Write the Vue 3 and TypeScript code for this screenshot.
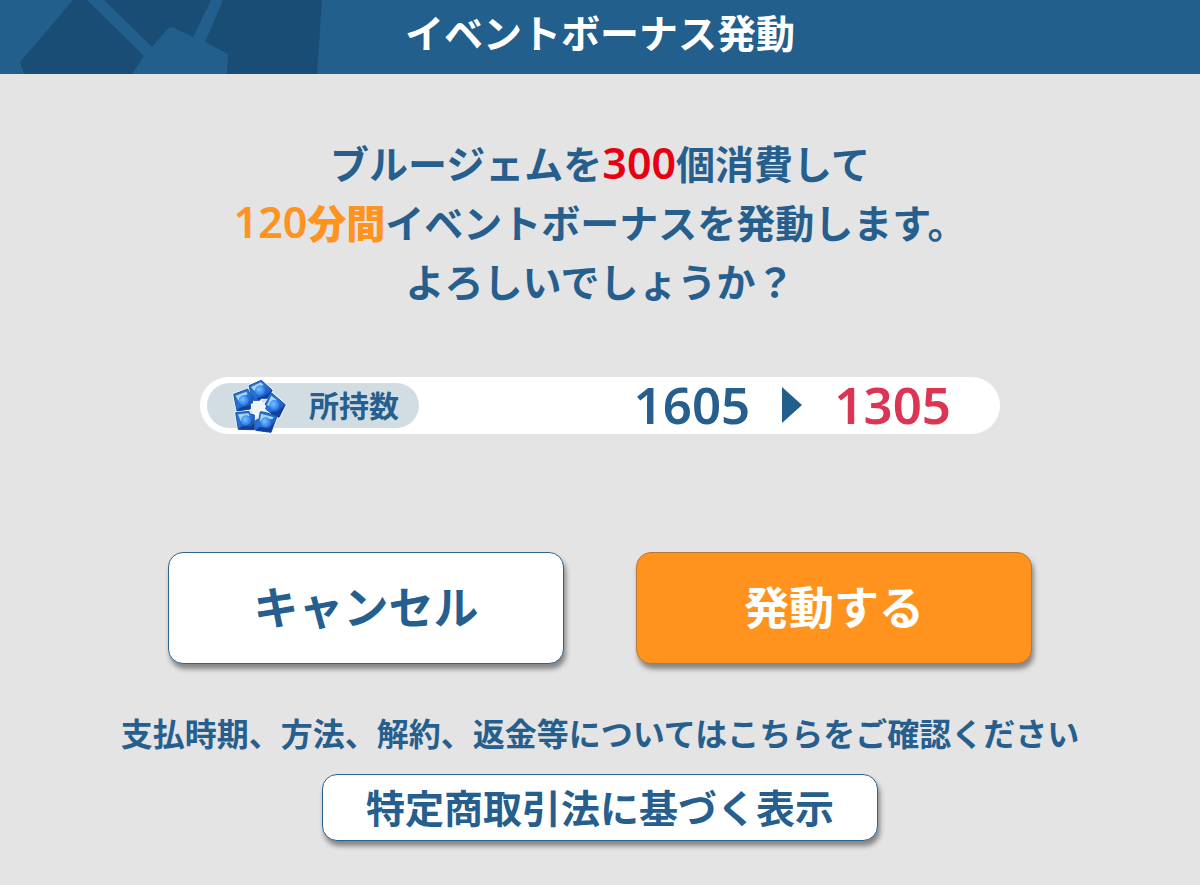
<script setup lang="ts">
import { computed, ref } from 'vue'

interface Gem {
  outline: string
  light: string
  shade: string
  x: number
  y: number
}

const owned = ref<number>(1605)
const cost = ref<number>(300)
const minutes = ref<number>(120)
const remaining = computed<number>(() => owned.value - cost.value)

const gems: Gem[] = [
  { outline: '74,28 111,12 144,42 129,66 110,66 106,72 88,72 81,56', light: '80,32 110,18 118,27 98,33 90,44', shade: '144,42 129,66 110,66 106,72 96,66 122,58', x: 107, y: 42 },
  { outline: '28,54 70,38 78,54 88,61 84,80 78,82 78,98 38,104', light: '34,58 66,46 70,54 50,62 44,76', shade: '38,104 78,98 78,86 66,90 46,94', x: 58, y: 72 },
  { outline: '142,50 183,85 164,123 147,116 124,98 127,88 122,84', light: '141,58 158,72 146,76 136,90 128,86', shade: '183,85 164,123 147,116 134,106 158,106', x: 150, y: 86 },
  { outline: '34,109 74,105 76,112 90,116 90,160 42,159', light: '41,114 72,111 76,119 54,124 50,136', shade: '42,159 90,160 90,140 80,150 52,150', x: 65, y: 132 },
  { outline: '108,106 122,108 158,120 140,168 94,162 94,132 104,128', light: '110,112 148,123 144,129 116,126 106,136', shade: '94,162 140,168 150,138 134,156 104,152', x: 124, y: 138 },
]
</script>

<template>
  <main class="dialog">
    <header class="bar">
      <svg class="bar-art" viewBox="0 0 330 74" aria-hidden="true">
        <path d="M73 0H87L144 56L132 74H24L20 62Z" />
        <path d="M104 0H211L193 37L172 27Q169 27 166 31L152 47Z" />
        <path d="M223 0H322L317 74H227L228 54L205 42Z" />
      </svg>
      <h1 class="title">イベントボーナス発動</h1>
    </header>

    <section class="content">
      <p class="message">
        ブルージェムを<strong class="figure cost">{{ cost }}</strong>個消費して<br />
        <strong class="time"><span class="figure">{{ minutes }}</span>分間</strong>イベントボーナスを発動します。<br />
        よろしいでしょうか？
      </p>

      <div class="balance">
        <div class="tag">
          <svg class="gem" viewBox="23 8 171 162" aria-hidden="true">
            <defs>
              <linearGradient id="gem-body" x1="0" y1="0" x2="1" y2="1">
                <stop offset="0" stop-color="#2a72d0" />
                <stop offset="0.5" stop-color="#2470dc" />
                <stop offset="1" stop-color="#15419c" />
              </linearGradient>
              <radialGradient id="gem-core" cx="0.4" cy="0.4" r="0.7">
                <stop offset="0" stop-color="#7cc0ff" />
                <stop offset="0.6" stop-color="#3f90ee" />
                <stop offset="1" stop-color="#2a76dc" />
              </radialGradient>
            </defs>
            <polygon class="gem-hole" points="80,78 108,71 127,88 120,108 94,124 79,98" />
            <polygon v-for="gem in gems" :key="gem.outline" class="gem-rim" :points="gem.outline" />
            <g v-for="gem in gems" :key="gem.light">
              <polygon class="gem-body" :points="gem.outline" />
              <polygon class="gem-shade" :points="gem.shade" />
              <polygon class="gem-light" :points="gem.light" />
              <circle class="gem-core" :cx="gem.x" :cy="gem.y" r="15" />
            </g>
          </svg>
          <span>所持数</span>
        </div>
        <div class="change">
          <span>{{ owned }}</span>
          <svg class="arrow" viewBox="0 0 20 36" aria-hidden="true"><path d="M0 0L20 18L0 36Z" /></svg>
          <span class="after">{{ remaining }}</span>
        </div>
      </div>

      <div class="actions">
        <button type="button" class="button">キャンセル</button>
        <button type="button" class="button primary">発動する</button>
      </div>

      <p class="note">支払時期、方法、解約、返金等についてはこちらをご確認ください</p>
      <button type="button" class="button legal">特定商取引法に基づく表示</button>
    </section>
  </main>
</template>

<style>
body {
  margin: 0;
  background: #e4e4e4;
}
</style>

<style scoped>
.dialog {
  min-height: 100vh;
  background: #e4e4e4;
  color: #265f8e;
  font-family: "Noto Sans CJK JP", sans-serif;
  font-weight: 700;
}

.bar {
  position: relative;
  box-sizing: border-box;
  height: 74px;
  padding-bottom: 12px;
  display: flex;
  align-items: center;
  justify-content: center;
  overflow: hidden;
  background: #235f8d;
}

.bar-art {
  position: absolute;
  top: 0;
  left: 0;
  width: 330px;
  height: 74px;
  fill: #1a4d75;
}

.title {
  position: relative;
  margin: 0;
  color: #fff;
  font-size: 39px;
  line-height: 56px;
}

.content {
  display: flex;
  flex-direction: column;
  align-items: center;
  padding: 59px 24px 44px;
}

.message {
  margin: 0;
  font-size: 39px;
  line-height: 59px;
  text-align: center;
}

.figure {
  font-family: "Noto Sans", sans-serif;
  font-size: 43px;
  font-weight: 600;
  line-height: 1;
}

.cost {
  color: #e60012;
}

.time {
  color: #ff931e;
}

.balance {
  box-sizing: border-box;
  width: 100%;
  max-width: 800px;
  height: 57px;
  margin-top: 67px;
  padding: 0 49px 0 7px;
  display: flex;
  align-items: center;
  justify-content: space-between;
  border-radius: 29px;
  background: #fff;
}

.tag {
  box-sizing: border-box;
  width: 212px;
  height: 45px;
  padding: 0 20px 0 25px;
  display: flex;
  align-items: center;
  justify-content: space-between;
  border-radius: 23px;
  background: #d2dde3;
  font-size: 30px;
  line-height: 44px;
}

.tag span {
  padding-bottom: 3px;
}

.gem {
  flex: none;
  width: 57px;
  height: 54px;
}

.gem-hole {
  fill: #eef6fb;
}

.gem-rim {
  fill: none;
  stroke: #f4faff;
  stroke-width: 7;
  stroke-linejoin: round;
}

.gem-body {
  fill: url(#gem-body);
  stroke: #1d56a0;
  stroke-width: 3;
}

.gem-shade {
  fill: #143f98;
}

.gem-light {
  fill: #a6d6fb;
}

.gem-core {
  fill: url(#gem-core);
}

.change {
  display: flex;
  align-items: center;
  gap: 32px;
  padding-bottom: 2px;
  font-family: "Noto Sans", sans-serif;
  font-size: 51px;
  font-weight: 600;
  line-height: 57px;
}

.arrow {
  width: 20px;
  height: 36px;
  fill: #235f8d;
}

.after {
  color: #dc3553;
}

.actions {
  width: 100%;
  max-width: 864px;
  margin-top: 118px;
  display: grid;
  grid-template-columns: 1fr 1fr;
  gap: 72px;
}

.button {
  box-sizing: border-box;
  padding: 0 12px 4px;
  min-height: 112px;
  border: 1px solid #2d648f;
  border-radius: 15px;
  background: #fff;
  box-shadow: 2px 5px 5px rgba(0, 0, 0, 0.42);
  color: inherit;
  font-family: inherit;
  font-size: 45px;
  font-weight: 700;
  line-height: 64px;
  cursor: pointer;
}

.primary {
  border-color: #b87838;
  background: #ff931e;
  color: #fff;
}

.note {
  margin: 44px 0 0;
  font-size: 32px;
  line-height: 48px;
  text-align: center;
}

.legal {
  width: 100%;
  max-width: 556px;
  min-height: 67px;
  margin-top: 18px;
  font-size: 39px;
  line-height: 56px;
}
</style>
